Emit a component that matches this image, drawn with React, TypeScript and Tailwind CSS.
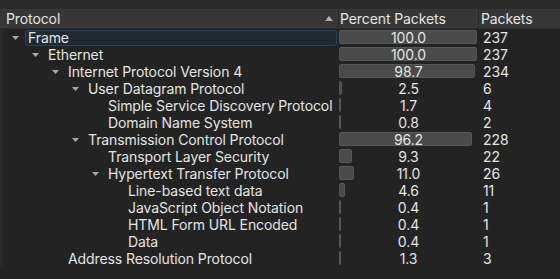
import React from 'react';

type Row = { name: string; level: number; open?: boolean; pct: string; packets: number; selected?: boolean };

const rows: Row[] = [
    { name: 'Frame', level: 0, open: true, pct: '100.0', packets: 237, selected: true },
    { name: 'Ethernet', level: 1, open: true, pct: '100.0', packets: 237 },
    { name: 'Internet Protocol Version 4', level: 2, open: true, pct: '98.7', packets: 234 },
    { name: 'User Datagram Protocol', level: 3, open: true, pct: '2.5', packets: 6 },
    { name: 'Simple Service Discovery Protocol', level: 4, pct: '1.7', packets: 4 },
    { name: 'Domain Name System', level: 4, pct: '0.8', packets: 2 },
    { name: 'Transmission Control Protocol', level: 3, open: true, pct: '96.2', packets: 228 },
    { name: 'Transport Layer Security', level: 4, pct: '9.3', packets: 22 },
    { name: 'Hypertext Transfer Protocol', level: 4, open: true, pct: '11.0', packets: 26 },
    { name: 'Line-based text data', level: 5, pct: '4.6', packets: 11 },
    { name: 'JavaScript Object Notation', level: 5, pct: '0.4', packets: 1 },
    { name: 'HTML Form URL Encoded', level: 5, pct: '0.4', packets: 1 },
    { name: 'Data', level: 5, pct: '0.4', packets: 1 },
    { name: 'Address Resolution Protocol', level: 2, pct: '1.3', packets: 3 },
];

function DownArrow() {
    return (
        <svg width="7" height="4" viewBox="0 0 7 4" className="shrink-0">
            <path d="M0 0 L7 0 L3.5 4 Z" fill="#a8a8a8" />
        </svg>
    );
}

export default function App() {
    return (
        <div className="w-[560px] h-[279px] bg-[#232323] text-[#e4e4e4] text-[14px] tracking-[-0.1px] overflow-hidden" style={{ fontFamily: 'Inter, sans-serif' }}>
            <div className="h-[9px] bg-[#2b2b2b]" />
            {/* header */}
            <div className="flex h-[20px] bg-[#373737] border-b border-[#2a2a2a]">
                <div className="w-[339px] flex items-center pl-[6px] pr-[5px] border-r border-[#2a2a2a]">
                    <span className="flex-1 leading-none">Protocol</span>
                    <svg width="8" height="5" viewBox="0 0 8 5">
                        <path d="M0 5 L8 5 L4 0 Z" fill="#b0b0b0" />
                    </svg>
                </div>
                <div className="w-[140px] flex items-center pl-[1px] border-r border-[#2a2a2a] leading-none">Percent Packets</div>
                <div className="flex-1 flex items-center pl-[2px] leading-none">Packets</div>
            </div>
            {/* rows */}
            <div className="border-l-[3px] border-[#2a2a2a]">
                {rows.map((r) => {
                    const w = Math.max(1, Math.round((parseFloat(r.pct) * 138) / 100));
                    return (
                        <div key={r.name} className="flex h-[17px] items-center">
                            <div className="w-[336px] h-full flex items-center pr-[2px]">
                                <div className="h-full flex items-center justify-end shrink-0" style={{ width: 16 + r.level * 20 }}>
                                    {r.open && <DownArrow />}
                                </div>
                                <div
                                    className={`flex-1 h-[16px] flex items-center ml-[6px] rounded-[2px] ${
                                        r.selected ? 'bg-[#1e2b36] border border-[#2d4252] pl-[2px]' : 'pl-[3px]'
                                    }`}
                                >
                                    <span className="leading-none">{r.name}</span>
                                </div>
                            </div>
                            <div className="w-[139px] h-full relative flex items-center justify-center">
                                <div
                                    className="absolute left-0 top-[1px] h-[14px] bg-[#4a4a4a] border border-[#575757] rounded-[2px]"
                                    style={{ width: w }}
                                />
                                <span className="relative leading-none">{r.pct}</span>
                            </div>
                            <div className="flex-1 pl-[5px] leading-none">{r.packets}</div>
                        </div>
                    );
                })}
            </div>
        </div>
    );
}
